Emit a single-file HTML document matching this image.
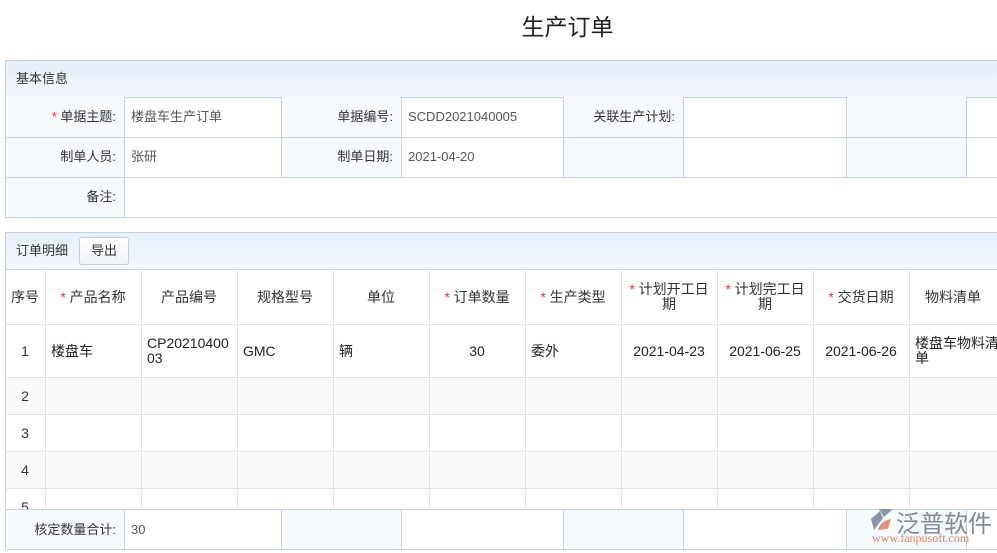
<!DOCTYPE html>
<html><head><meta charset="utf-8"><style>
*{margin:0;padding:0;box-sizing:border-box}
body{width:997px;height:553px;background:#fff;position:relative;overflow:hidden;font-family:"Liberation Sans","Noto Sans CJK SC",sans-serif;font-size:13px;color:#333}
.a{position:absolute}
.hd{background:linear-gradient(#e6eefa,#f5f8fd);border:1px solid #c5d0e0}
.lb{background:#f6f9fd;text-align:right;padding-right:8px;line-height:40px;color:#333}
.vl{position:absolute;width:1px;background:#c5d0e0}
.hl{position:absolute;height:1px;background:#c5d0e0}
.gv{position:absolute;width:1px;background:#e3e3e3}
.gh{position:absolute;height:1px;background:#e3e3e3}
.r{color:#e33}
.c{position:absolute;text-align:center;display:flex;align-items:center;justify-content:center;line-height:15px;font-size:14px}
.v{color:#555;line-height:40px;position:absolute;padding-left:7px}
</style></head><body>
<div class="a" style="left:0;width:1135px;top:8px;text-align:center;font-size:23px;color:#222">生产订单</div>

<div class="a hd" style="left:5px;top:60px;width:1000px;height:38px;line-height:36px;padding-left:10px;color:#333">基本信息</div>
<div class="a lb" style="left:5px;top:97px;width:119px;height:120px"></div>
<div class="a lb" style="left:281px;top:97px;width:120px;height:80px"></div>
<div class="a lb" style="left:563px;top:97px;width:120px;height:80px"></div>
<div class="a lb" style="left:846px;top:97px;width:120px;height:80px"></div>
<div class="a lb" style="left:5px;top:97px;width:119px;height:40px"><span class="r">* </span>单据主题:</div>
<div class="a lb" style="left:5px;top:137px;width:119px;height:40px">制单人员:</div>
<div class="a lb" style="left:5px;top:177px;width:119px;height:40px">备注:</div>
<div class="a lb" style="left:281px;top:97px;width:120px;height:40px">单据编号:</div>
<div class="a lb" style="left:281px;top:137px;width:120px;height:40px">制单日期:</div>
<div class="a lb" style="left:563px;top:97px;width:120px;height:40px">关联生产计划:</div>
<div class="v" style="left:124px;top:97px">楼盘车生产订单</div>
<div class="v" style="left:124px;top:137px">张研</div>
<div class="v" style="left:401px;top:97px">SCDD2021040005</div>
<div class="v" style="left:401px;top:137px">2021-04-20</div>
<div class="vl" style="left:5px;top:97px;height:120px"></div>
<div class="vl" style="left:124px;top:97px;height:120px"></div>
<div class="vl" style="left:281px;top:97px;height:80px"></div>
<div class="vl" style="left:401px;top:97px;height:80px"></div>
<div class="vl" style="left:563px;top:97px;height:80px"></div>
<div class="vl" style="left:683px;top:97px;height:80px"></div>
<div class="vl" style="left:846px;top:97px;height:80px"></div>
<div class="vl" style="left:966px;top:97px;height:80px"></div>
<div class="hl" style="left:5px;top:137px;width:992px"></div>
<div class="hl" style="left:5px;top:177px;width:992px"></div>
<div class="hl" style="left:5px;top:217px;width:992px"></div>

<div class="a hd" style="left:5px;top:232px;width:1000px;height:38px;line-height:36px;padding-left:10px">订单明细</div>
<div class="a" style="left:79px;top:237px;width:50px;height:28px;border:1px solid #c5cdd8;border-radius:3px;background:linear-gradient(#fff,#f0f3f7);text-align:center;line-height:26px;color:#333">导出</div>
<div class="a" style="left:5px;top:377px;width:992px;height:37px;background:#fafafa"></div>
<div class="a" style="left:5px;top:451px;width:992px;height:37px;background:#fafafa"></div>
<div class="vl" style="left:5px;top:269px;height:241px"></div>
<div class="gv" style="left:45px;top:269px;height:241px"></div>
<div class="gv" style="left:141px;top:269px;height:241px"></div>
<div class="gv" style="left:237px;top:269px;height:241px"></div>
<div class="gv" style="left:333px;top:269px;height:241px"></div>
<div class="gv" style="left:429px;top:269px;height:241px"></div>
<div class="gv" style="left:525px;top:269px;height:241px"></div>
<div class="gv" style="left:621px;top:269px;height:241px"></div>
<div class="gv" style="left:717px;top:269px;height:241px"></div>
<div class="gv" style="left:813px;top:269px;height:241px"></div>
<div class="gv" style="left:909px;top:269px;height:241px"></div>
<div class="gh" style="left:5px;top:324px;width:992px"></div>
<div class="gh" style="left:5px;top:377px;width:992px"></div>
<div class="gh" style="left:5px;top:414px;width:992px"></div>
<div class="gh" style="left:5px;top:451px;width:992px"></div>
<div class="gh" style="left:5px;top:488px;width:992px"></div>

<div class="c" style="left:5px;top:270px;width:40px;height:54px">序号</div>
<div class="c" style="left:45px;top:270px;width:96px;height:54px"><span class="r">*&nbsp;</span>产品名称</div>
<div class="c" style="left:141px;top:270px;width:96px;height:54px">产品编号</div>
<div class="c" style="left:237px;top:270px;width:96px;height:54px">规格型号</div>
<div class="c" style="left:333px;top:270px;width:96px;height:54px">单位</div>
<div class="c" style="left:429px;top:270px;width:96px;height:54px"><span class="r">*&nbsp;</span>订单数量</div>
<div class="c" style="left:525px;top:270px;width:96px;height:54px"><span class="r">*&nbsp;</span>生产类型</div>
<div class="c" style="left:621px;top:270px;width:96px;height:54px;padding:0 5px"><span><span class="r">*</span> 计划开工日期</span></div>
<div class="c" style="left:717px;top:270px;width:96px;height:54px;padding:0 5px"><span><span class="r">*</span> 计划完工日期</span></div>
<div class="c" style="left:813px;top:270px;width:96px;height:54px"><span class="r">*&nbsp;</span>交货日期</div>
<div class="c" style="left:909px;top:270px;width:96px;height:54px;padding-right:8px">物料清单</div>

<div class="c" style="left:5px;top:325px;width:40px;height:52px">1</div>
<div class="c" style="left:45px;top:325px;width:96px;height:52px;justify-content:flex-start;padding-left:6px;color:#222">楼盘车</div>
<div class="c" style="left:141px;top:325px;width:90px;height:52px;justify-content:flex-start;padding-left:6px;text-align:left;color:#222;word-break:break-all">CP2021040003</div>
<div class="c" style="left:237px;top:325px;width:96px;height:52px;justify-content:flex-start;padding-left:6px;color:#222">GMC</div>
<div class="c" style="left:333px;top:325px;width:96px;height:52px;justify-content:flex-start;padding-left:6px;color:#222">辆</div>
<div class="c" style="left:429px;top:325px;width:96px;height:52px;color:#222">30</div>
<div class="c" style="left:525px;top:325px;width:96px;height:52px;justify-content:flex-start;padding-left:6px;color:#222">委外</div>
<div class="c" style="left:621px;top:325px;width:96px;height:52px;color:#222">2021-04-23</div>
<div class="c" style="left:717px;top:325px;width:96px;height:52px;color:#222">2021-06-25</div>
<div class="c" style="left:813px;top:325px;width:96px;height:52px;color:#222">2021-06-26</div>
<div class="c" style="left:909px;top:325px;width:100px;height:52px;justify-content:flex-start;padding-left:6px;text-align:left;color:#222">楼盘车物料清单</div>

<div class="c" style="left:5px;top:378px;width:40px;height:36px">2</div>
<div class="c" style="left:5px;top:415px;width:40px;height:36px">3</div>
<div class="c" style="left:5px;top:452px;width:40px;height:36px">4</div>
<div class="c" style="left:5px;top:489px;width:40px;height:36px">5</div>

<div class="a" style="left:0;top:509px;width:997px;height:44px;background:#fff"></div>
<div class="a lb" style="left:5px;top:510px;width:119px;height:39px;line-height:39px">核定数量合计:</div>
<div class="a lb" style="left:281px;top:510px;width:120px;height:39px"></div>
<div class="a lb" style="left:563px;top:510px;width:120px;height:39px"></div>
<div class="a lb" style="left:846px;top:510px;width:120px;height:39px"></div>
<div class="v" style="left:124px;top:510px;line-height:39px">30</div>
<div class="hl" style="left:5px;top:509px;width:992px"></div>
<div class="hl" style="left:5px;top:549px;width:992px"></div>
<div class="vl" style="left:5px;top:509px;height:40px"></div>
<div class="vl" style="left:124px;top:509px;height:40px"></div>
<div class="vl" style="left:281px;top:509px;height:40px"></div>
<div class="vl" style="left:401px;top:509px;height:40px"></div>
<div class="vl" style="left:563px;top:509px;height:40px"></div>
<div class="vl" style="left:683px;top:509px;height:40px"></div>
<div class="vl" style="left:846px;top:509px;height:40px"></div>
<div class="vl" style="left:966px;top:509px;height:40px"></div>

<svg class="a" style="left:867px;top:508px" width="30" height="24" viewBox="0 0 30 24">
<path d="M12 1 L26 1 L17 9 Z" fill="#8a94a8"/>
<path d="M4 11 L13 3 L16 10 L7 22 Z" fill="#8a94a8"/>
<path d="M11 22 Q13 13 24 11 L21 21 Z" fill="#e0967a"/>
</svg>
<div class="a" style="left:896px;top:504px;font-size:24px;color:#7f8a9e;letter-spacing:0px">泛普软件</div>
<div class="a" style="left:872px;top:531px;font-size:12px;color:#d9866a;font-family:'Liberation Serif',serif">www.fanpusoft.com</div>
</body></html>
